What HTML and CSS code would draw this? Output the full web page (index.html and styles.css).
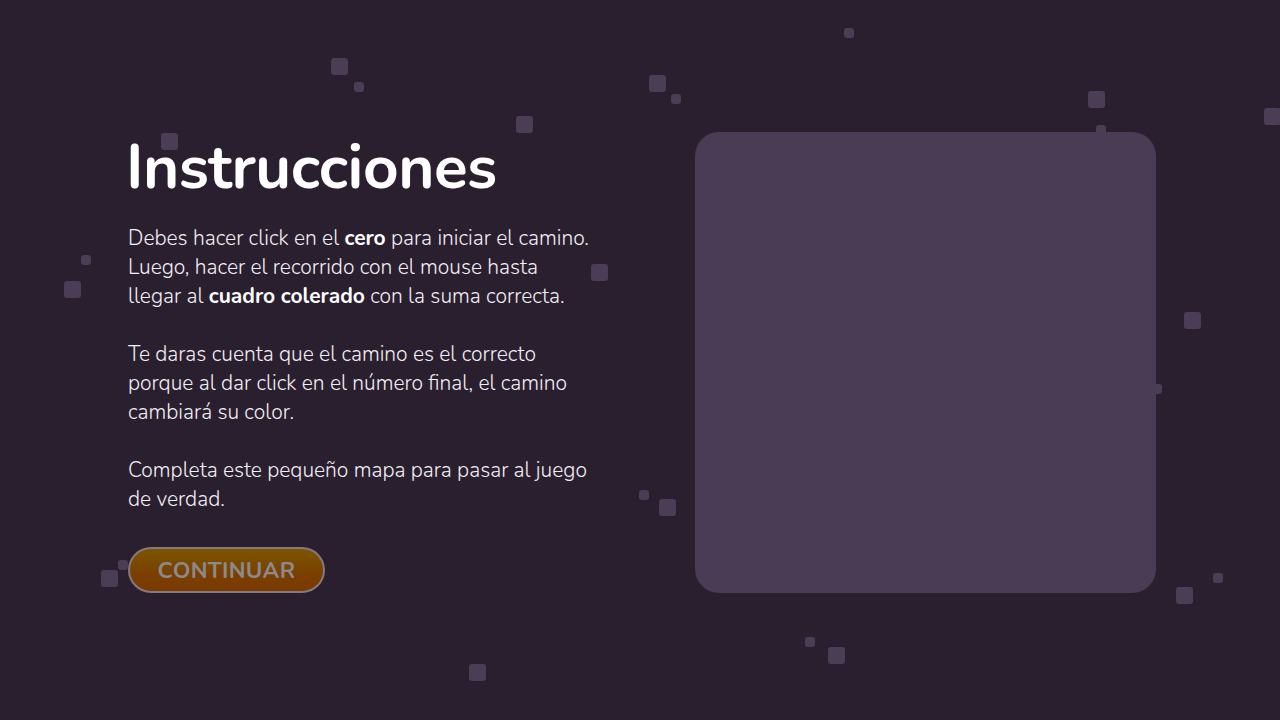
FILE: index.html
```html
<!DOCTYPE html>
<html lang="es">
<head>
<meta charset="utf-8">
<title>Instrucciones</title>
<link rel="stylesheet" href="styles.css">
</head>
<body>
<div class="bg">
  <span class="sq big" style="left:331px;top:58px"></span>
  <span class="sq small" style="left:354px;top:82px"></span>
  <span class="sq big" style="left:161px;top:133px"></span>
  <span class="sq big" style="left:516px;top:116px"></span>
  <span class="sq big" style="left:649px;top:75px"></span>
  <span class="sq small" style="left:671px;top:94px"></span>
  <span class="sq small" style="left:844px;top:28px"></span>
  <span class="sq big" style="left:1088px;top:91px"></span>
  <span class="sq small" style="left:1096px;top:125px"></span>
  <span class="sq big" style="left:1264px;top:108px"></span>
  <span class="sq big" style="left:1184px;top:312px"></span>
  <span class="sq small" style="left:1152px;top:384px"></span>
  <span class="sq small" style="left:81px;top:255px"></span>
  <span class="sq big" style="left:64px;top:281px"></span>
  <span class="sq big" style="left:591px;top:264px"></span>
  <span class="sq small" style="left:639px;top:490px"></span>
  <span class="sq big" style="left:659px;top:499px"></span>
  <span class="sq small" style="left:118px;top:560px"></span>
  <span class="sq big" style="left:101px;top:570px"></span>
  <span class="sq small" style="left:1213px;top:573px"></span>
  <span class="sq big" style="left:1176px;top:587px"></span>
  <span class="sq small" style="left:805px;top:637px"></span>
  <span class="sq big" style="left:828px;top:647px"></span>
  <span class="sq big" style="left:469px;top:664px"></span>
</div>
<main class="screen">
  <section class="info">
    <h1 class="title">Instrucciones</h1>
    <p class="text">Debes hacer click en el <b>cero</b> para iniciar el camino. Luego, hacer el recorrido con el mouse hasta llegar al <b>cuadro colerado</b> con la suma correcta.</p>
    <p class="text">Te daras cuenta que el camino es el correcto porque al dar click en el número final, el camino cambiará su color.</p>
    <p class="text">Completa este pequeño mapa para pasar al juego de verdad.</p>
    <button class="btn" type="button">CONTINUAR</button>
  </section>
  <div class="board"></div>
</main>
</body>
</html>
```
FILE: styles.css
```css
* { box-sizing: border-box; }
html, body {
  margin: 0;
  width: 1280px;
  height: 720px;
  overflow: hidden;
  background: #2a1f2f;
  font-family: "Nunito", "Lato", "Noto Sans", sans-serif;
  color: #f2eff4;
}
.bg {
  position: absolute;
  inset: 0;
  z-index: 0;
}
.sq {
  position: absolute;
  background: #4a3d55;
  border-radius: 3px;
}
.sq.big { width: 17px; height: 17px; }
.sq.small { width: 10px; height: 10px; }
.screen {
  position: relative;
  z-index: 1;
  display: flex;
  align-items: flex-start;
  height: 720px;
  padding: 132px 0 0 128px;
}
.info {
  width: 463px;
  display: flex;
  flex-direction: column;
  align-items: flex-start;
}
.title {
  margin: -2px 0 0 -2px;
  font-size: 62px;
  font-weight: 700;
  line-height: 76px;
  color: #ffffff;
  letter-spacing: -0.5px;
}
.text {
  margin: 18px 0 0;
  font-size: 21px;
  line-height: 29px;
  font-weight: 300;
}
.text + .text { margin-top: 29px; }
.text b { font-weight: 700; color: #ffffff; }
.btn {
  margin-top: 33px;
  width: 197px;
  height: 46px;
  border: 2px solid #85797f;
  border-radius: 23px;
  background: linear-gradient(#7b5500, #7a3f00 60%, #7a3a00);
  color: #8c8a8c;
  font-family: inherit;
  font-size: 22.5px;
  font-weight: 700;
  letter-spacing: 0.3px;
  padding: 0;
}
.board {
  margin-left: 104px;
  width: 461px;
  height: 461px;
  border-radius: 24px;
  background: #4a3c54;
}
```
